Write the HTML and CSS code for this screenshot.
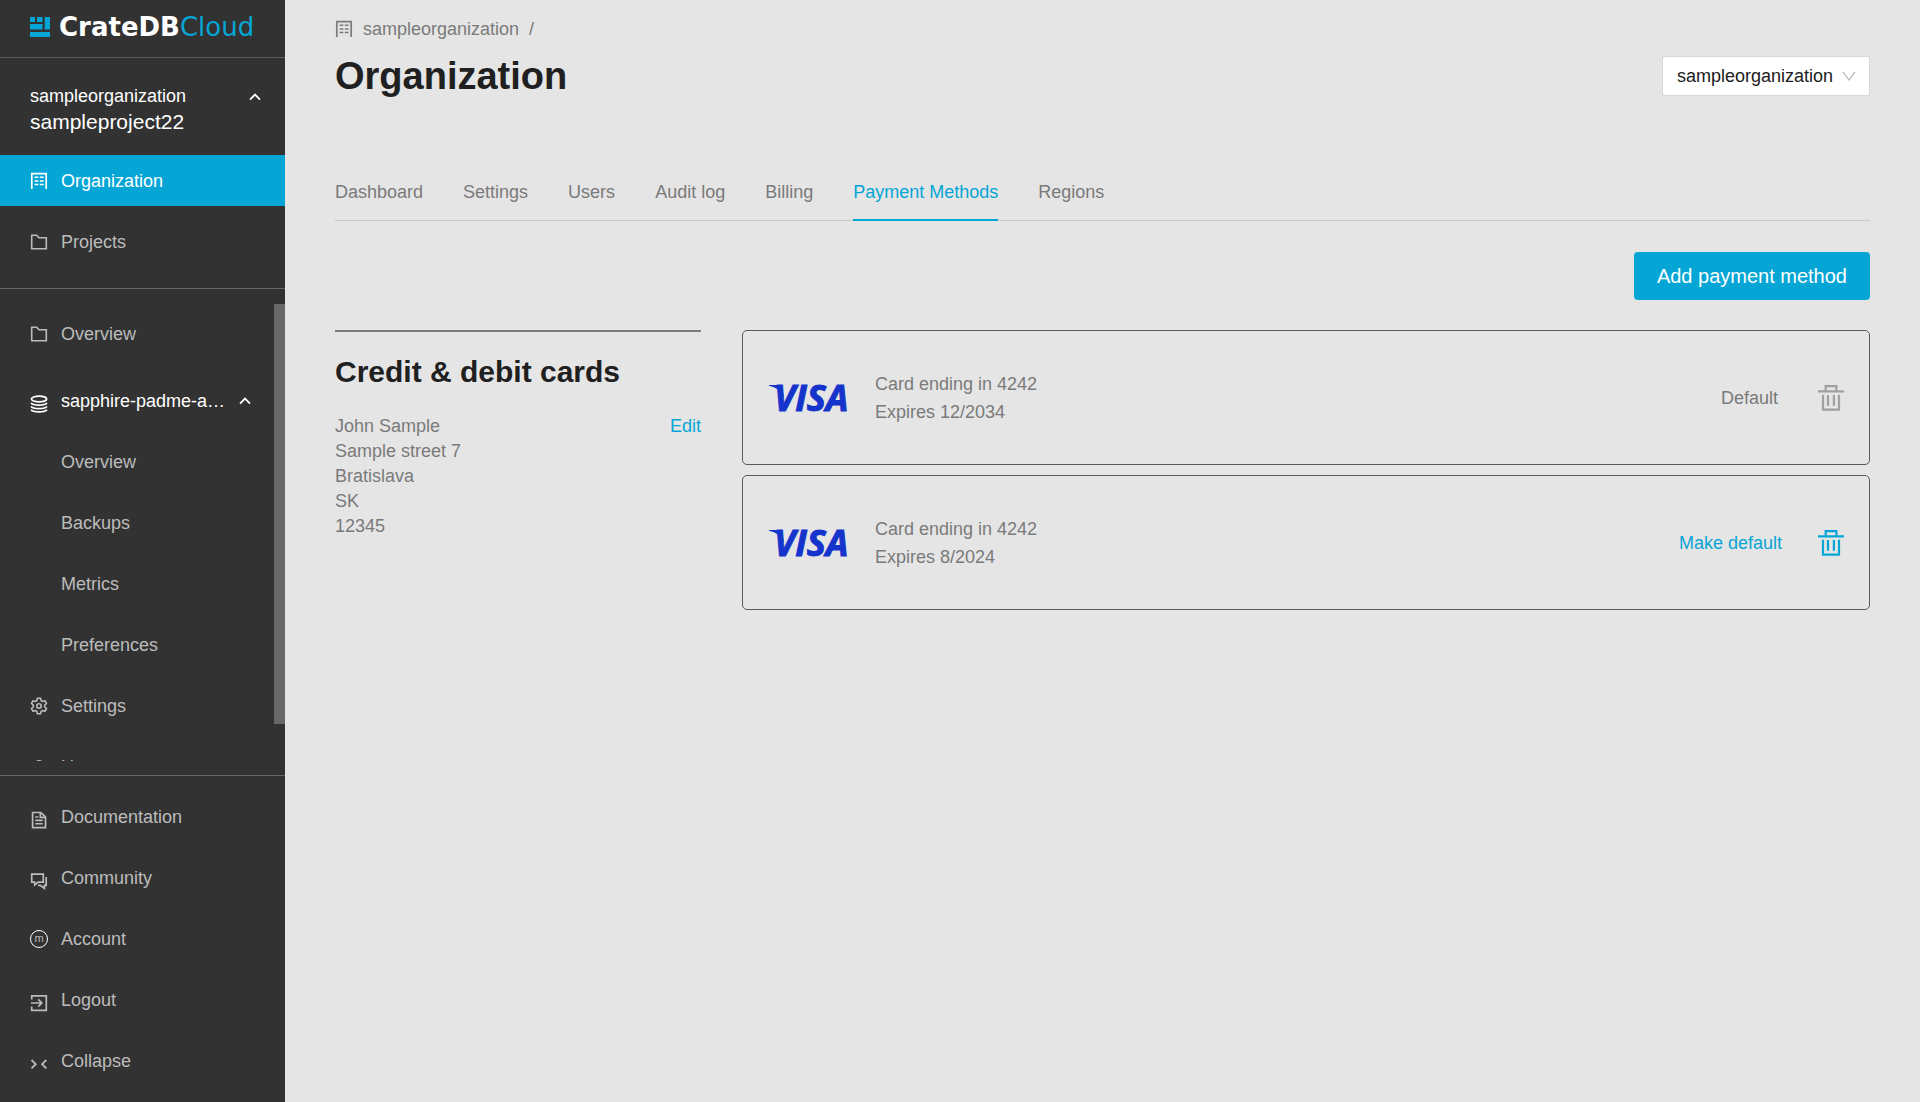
FILE: index.html
```html
<!DOCTYPE html>
<html lang="en">
<head>
<meta charset="utf-8">
<meta name="viewport" content="width=device-width, initial-scale=1">
<title>Organization - CrateDB Cloud</title>
<link rel="stylesheet" href="styles.css">
</head>
<body>
<svg class="sprite" aria-hidden="true">
  <symbol id="i-building" viewBox="0 0 18 18"><path d="M1.800 17V1.700h14.400V17" fill="none" stroke="currentColor" stroke-width="1.700"/><path d="M4.600 5.200h3.800M9.800 5.200h3.800M4.600 8.900h3.800M9.800 8.900h3.800M4.600 12.500h3.800M9.800 12.500h3.800" stroke="currentColor" stroke-width="1.500"/></symbol>
  <symbol id="i-folder" viewBox="0 0 18 18"><path d="M1.700 15.700V2.200h5l2.200 2.600h7.400v10.900z" fill="none" stroke="currentColor" stroke-width="1.600"/></symbol>
  <symbol id="i-database" viewBox="0 0 18 18"><g fill="none" stroke="currentColor" stroke-width="1.700"><ellipse cx="9" cy="4" rx="7.600" ry="2.900"/><path d="M1.100 7.800c1.600 3 14.200 3 15.800 0M1.100 11.300c1.600 3 14.200 3 15.800 0M1.100 14.700c1.600 3 14.200 3 15.800 0"/></g></symbol>
  <symbol id="i-gear" viewBox="0 0 18 18"><g fill="none" stroke="currentColor" stroke-width="1.600" stroke-linejoin="round"><path d="M7.400 1.200h3.200l.5 2.400 1.500.9 2.300-.8 1.600 2.800-1.800 1.600v1.800l1.800 1.600-1.600 2.800-2.300-.8-1.500.9-.5 2.400H7.400l-.5-2.400-1.500-.9-2.300.8-1.600-2.800 1.800-1.600V8.100L1.500 6.500l1.600-2.800 2.300.8 1.500-.9z"/><circle cx="9" cy="9" r="2.200"/></g></symbol>
  <symbol id="i-user" viewBox="0 0 18 18"><g fill="none" stroke="currentColor" stroke-width="1.500"><circle cx="9" cy="6" r="3.200"/><path d="M2 17c0-8 14-8 14 0"/></g></symbol>
  <symbol id="i-doc" viewBox="0 0 18 18"><path d="M2.600 1.500h8.200l4.700 4.300v10.900H2.600z" fill="none" stroke="currentColor" stroke-width="1.700"/><path d="M10.300 1.500v4.900h5M5.300 6h3M5.300 9.400h7.400M5.300 12.700h7.400" fill="none" stroke="currentColor" stroke-width="1.600"/></symbol>
  <symbol id="i-chat" viewBox="0 0 18 18"><path d="M1.700 2.200h11.600v7.900H8.200L4.700 13v-2.900h-3zM16.200 5v8.300h-1.800v3l-4.300-3H8" fill="none" stroke="currentColor" stroke-width="1.700"/></symbol>
  <symbol id="i-logout" viewBox="0 0 18 18"><path d="M1.700 5.500V1.800h14.600v14.500H1.700v-3.700M1 9h10.500M8.200 5.400 11.800 9l-3.600 3.600" fill="none" stroke="currentColor" stroke-width="1.700"/></symbol>
  <symbol id="i-collapse" viewBox="0 0 18 18"><path d="M1.500 5 5.700 9.200l-4.200 4.200M16.300 5l-4.200 4.200 4.200 4.200" fill="none" stroke="currentColor" stroke-width="1.800"/></symbol>
  <symbol id="i-up" viewBox="0 0 12 8"><path d="M1 6.600 6 1.600l5 5" fill="none" stroke="currentColor" stroke-width="1.800"/></symbol>
  <symbol id="i-down" viewBox="0 0 14 10"><path d="M1 .8 7 9 13 .8" fill="none" stroke="currentColor" stroke-width="1.200"/></symbol>
  <symbol id="i-trash" viewBox="0 0 26 26"><path d="M0 6.300h26M7.700 6V1.200h10.700V6M5 9.800v14.800h16V9.800M10 10v10.700M15.900 10v10.700" fill="none" stroke="currentColor" stroke-width="2.200"/></symbol>
</svg>

<div class="app">
  <aside class="sidebar">
    <a class="brand" href="#">
      <svg class="brand-mark" viewBox="0 0 20 20" aria-hidden="true"><path fill="currentColor" d="M0 0h5v5H0zM7 0h5.500v5H7zM14.700 0H20v12.500h-5.300zM0 7h12.500v5.500H0zM0 15h20v5H0z"/></svg>
      <span class="brand-name"><span>CrateDB</span><span class="brand-cloud">Cloud</span></span>
    </a>

    <button class="switcher" type="button">
      <span class="switcher-names"><span>sampleorganization</span><span class="switcher-project">sampleproject22</span></span>
      <svg class="caret"><use href="#i-up"/></svg>
    </button>

    <nav class="menu menu-top" aria-label="Organization">
      <a class="item active" href="#"><svg class="icon"><use href="#i-building"/></svg>Organization</a>
      <a class="item" href="#"><svg class="icon"><use href="#i-folder"/></svg>Projects</a>
    </nav>

    <div class="project">
      <nav class="menu project-menu" aria-label="Project">
        <a class="item" href="#"><svg class="icon"><use href="#i-folder"/></svg>Overview</a>
        <button class="item cluster" type="button"><svg class="icon icon-low"><use href="#i-database"/></svg><span class="cluster-name">sapphire-padme-amidala</span><svg class="caret"><use href="#i-up"/></svg></button>
        <a class="item sub" href="#">Overview</a>
        <a class="item sub" href="#">Backups</a>
        <a class="item sub" href="#">Metrics</a>
        <a class="item sub" href="#">Preferences</a>
        <a class="item" href="#"><svg class="icon"><use href="#i-gear"/></svg>Settings</a>
        <a class="item" href="#"><svg class="icon"><use href="#i-user"/></svg>Users</a>
      </nav>
      <div class="scroll-thumb"></div>
    </div>

    <nav class="menu menu-bottom" aria-label="Support and account">
      <a class="item" href="#"><svg class="icon icon-low"><use href="#i-doc"/></svg>Documentation</a>
      <a class="item" href="#"><svg class="icon icon-low"><use href="#i-chat"/></svg>Community</a>
      <a class="item" href="#"><span class="icon avatar">m</span>Account</a>
      <a class="item" href="#"><svg class="icon icon-low"><use href="#i-logout"/></svg>Logout</a>
      <button class="item" type="button"><svg class="icon icon-low"><use href="#i-collapse"/></svg>Collapse</button>
    </nav>
  </aside>

  <main class="content">
    <nav class="breadcrumb" aria-label="Breadcrumb">
      <svg class="icon"><use href="#i-building"/></svg>
      <a href="#">sampleorganization</a>
      <span>/</span>
    </nav>
    <header class="page-head">
      <h1>Organization</h1>
      <div class="picker">
        <select aria-label="Organization"><option>sampleorganization</option></select>
        <svg class="picker-arrow"><use href="#i-down"/></svg>
      </div>
    </header>

    <nav class="tabs" aria-label="Sections">
      <a href="#">Dashboard</a>
      <a href="#">Settings</a>
      <a href="#">Users</a>
      <a href="#">Audit log</a>
      <a href="#">Billing</a>
      <a class="selected" href="#" aria-current="page">Payment Methods</a>
      <a href="#">Regions</a>
    </nav>

    <div class="actions"><button class="primary" type="button">Add payment method</button></div>

    <div class="columns">
      <section class="billing">
        <h2>Credit &amp; debit cards</h2>
        <div class="billing-row">
          <address>John Sample<br>Sample street 7<br>Bratislava<br>SK<br>12345</address>
          <a class="link" href="#">Edit</a>
        </div>
      </section>
      <section class="cards" aria-label="Saved cards">
        <article class="card">
          <svg class="visa" viewBox="0 0 82 28" role="img" aria-label="Visa"><path d="M0 1h9c2.500 0 3.600 1 4.200 3.500l2 9.500C12.500 7 7 3.300 0 1.800z" fill="currentColor"/><text class="visa-text" x="5" y="27">VISA</text></svg>
          <p class="card-info">Card ending in 4242<br>Expires 12/2034</p>
          <span class="status">Default</span>
          <button class="trash" type="button" aria-label="Delete card" disabled><svg><use href="#i-trash"/></svg></button>
        </article>
        <article class="card">
          <svg class="visa" viewBox="0 0 82 28" role="img" aria-label="Visa"><path d="M0 1h9c2.500 0 3.600 1 4.200 3.500l2 9.500C12.500 7 7 3.300 0 1.800z" fill="currentColor"/><text class="visa-text" x="5" y="27">VISA</text></svg>
          <p class="card-info">Card ending in 4242<br>Expires 8/2024</p>
          <button class="link" type="button">Make default</button>
          <button class="trash" type="button" aria-label="Delete card"><svg><use href="#i-trash"/></svg></button>
        </article>
      </section>
    </div>
  </main>
</div>
</body>
</html>
```
FILE: styles.css
```css
:root {
  --accent: #05a6d5;
  --dark: #323232;
  --muted: #7a7a7a;
  --ink: #202020;
}

* { box-sizing: border-box; }

body {
  margin: 0;
  background: #e5e5e5;
  color: var(--muted);
  font: 18px/24px "Liberation Sans", Arial, sans-serif;
}

a { color: inherit; text-decoration: none; }

button {
  margin: 0;
  padding: 0;
  border: 0;
  background: none;
  color: inherit;
  font: inherit;
  text-align: left;
  cursor: pointer;
}

h1, h2, p { margin: 0; }

svg { display: block; flex: none; }

.sprite { position: absolute; width: 0; height: 0; }

.app { display: flex; min-height: 100vh; }

/* Sidebar */
.sidebar {
  position: sticky;
  top: 0;
  display: flex;
  flex: none;
  flex-direction: column;
  width: 285px;
  height: 100vh;
  background: var(--dark);
  color: #bcbcbc;
}

.brand {
  display: flex;
  flex: none;
  align-items: center;
  gap: 9px;
  height: 58px;
  padding: 0 28px 4px 30px;
  border-bottom: 1px solid #5c5c5c;
  color: var(--accent);
}

.brand-mark { width: 20px; height: 20px; }

.brand-name {
  display: flex;
  color: #fff;
  font: bold 26px/32px "DejaVu Sans", sans-serif;
}

.brand-cloud { color: var(--accent); font-weight: normal; }

.switcher {
  display: flex;
  flex: none;
  align-items: flex-start;
  justify-content: space-between;
  padding: 25px 24px 20px 30px;
  color: #fff;
  line-height: 26px;
}

.switcher-names { display: flex; flex-direction: column; }
.switcher-project { font-size: 21px; }
.caret { width: 12px; height: 8px; }
.switcher .caret { margin-top: 10px; }

.menu { display: flex; flex-direction: column; gap: 10px; }

.menu-top {
  flex: none;
  padding-bottom: 21px;
  border-bottom: 1px solid #666;
}

.item {
  display: flex;
  flex: none;
  align-items: center;
  gap: 13px;
  width: 100%;
  height: 51px;
  padding: 0 30px;
}

.item.active { background: var(--accent); color: #fff; }
.item.sub { padding-left: 61px; }
.icon { flex: none; width: 18px; height: 18px; }
.icon-low { margin-top: 6px; }

.avatar {
  border: 1px solid #fff;
  border-radius: 50%;
  font-size: 11px;
  line-height: 15px;
  text-align: center;
}

.project {
  position: relative;
  flex: 1;
  min-height: 0;
  margin: 15px 0 14px;
  overflow: hidden;
}

.project-menu { padding-top: 4px; }

.cluster { margin: 6px 0 0; padding-right: 34px; color: #fff; }

.cluster-name {
  flex: 1;
  margin-right: -5px;
  overflow: hidden;
  text-overflow: ellipsis;
  white-space: nowrap;
}

/* Scroll position marker laid over the project menu */
.scroll-thumb {
  position: absolute;
  top: 0;
  right: 0;
  width: 11px;
  height: 92%;
  background: #686868;
}

.menu-bottom {
  flex: none;
  padding: 15px 0 16px;
  border-top: 1px solid #666;
}

/* Content */
.content { flex: 1; min-width: 0; padding: 17px 50px 50px; }

.breadcrumb { display: flex; align-items: center; gap: 10px; }

.page-head {
  display: flex;
  align-items: center;
  justify-content: space-between;
  padding-top: 11px;
}

h1 { color: var(--ink); font-size: 38px; line-height: 48px; }

.picker { position: relative; }

.picker select {
  appearance: none;
  height: 40px;
  padding: 0 35px 0 14px;
  border: 1px solid #d6d6d6;
  border-radius: 2px;
  background: #fff;
  color: var(--ink);
  font: inherit;
}

.picker-arrow {
  position: absolute;
  top: 15px;
  right: 14px;
  width: 14px;
  height: 10px;
  color: #b5b5b5;
  pointer-events: none;
}

.tabs {
  display: flex;
  gap: 40px;
  margin-top: 80px;
  border-bottom: 1px solid #c8c8c8;
}

.tabs a { height: 41px; margin-bottom: -1px; }
.tabs .selected { border-bottom: 2px solid var(--accent); color: var(--accent); }

.actions { display: flex; justify-content: flex-end; margin-top: 31px; }

.primary {
  height: 48px;
  padding: 0 23px;
  border-radius: 4px;
  background: var(--accent);
  color: #fff;
  font-size: 20px;
}

.columns {
  display: grid;
  grid-template-columns: 61fr 188fr;
  align-items: start;
  gap: 41px;
  margin-top: 30px;
}

.billing { padding-top: 22px; border-top: 2px solid #7c7c7c; }

h2 { color: var(--ink); font-size: 30px; line-height: 36px; }

.billing-row {
  display: flex;
  align-items: flex-start;
  justify-content: space-between;
  padding-top: 24px;
}

address { font-style: normal; line-height: 25px; }

.link { color: var(--accent); }

.cards { display: grid; gap: 10px; }

.card {
  display: flex;
  align-items: center;
  min-height: 135px;
  padding: 0 25px 0 26px;
  border: 1px solid #5a5a5a;
  border-radius: 5px;
}

.visa { width: 82px; height: 28px; overflow: visible; color: #1434cb; }

.visa-text {
  fill: currentColor;
  stroke: currentColor;
  stroke-width: 1px;
  font: italic 700 36px "Open Sans", sans-serif;
}

.card-info { flex: 1; padding-left: 24px; line-height: 28px; }
.status { padding-right: 4px; }
.trash { margin-left: 36px; color: var(--accent); }
.trash:disabled { color: #a0a0a0; cursor: default; }
.trash svg { width: 26px; height: 26px; }
```
